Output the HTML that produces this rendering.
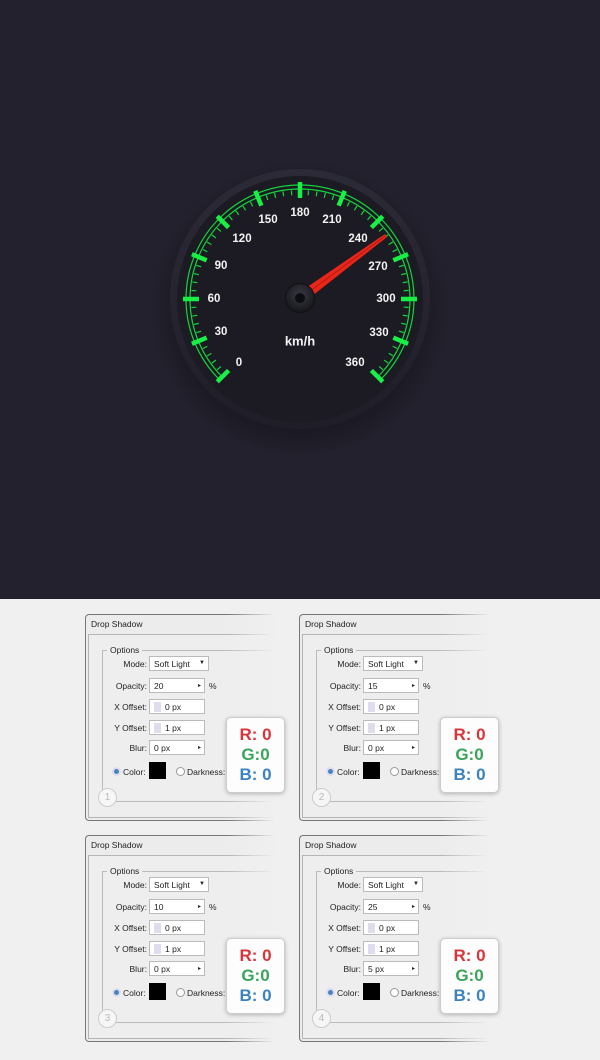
<!DOCTYPE html>
<html><head><meta charset="utf-8"><style>
*{margin:0;padding:0;box-sizing:border-box}
body{width:600px;height:1060px;background:#f0f0f0;position:relative;overflow:hidden;font-family:"Liberation Sans",sans-serif}
#top{position:absolute;left:0;top:0;width:600px;height:599px;background:#23212d}
.p{position:absolute;width:190px;height:207px;font-size:8.5px;color:#222;-webkit-mask-image:linear-gradient(90deg,#000 75%,rgba(0,0,0,0) 100%);mask-image:linear-gradient(90deg,#000 75%,rgba(0,0,0,0) 100%)}
.frame{position:absolute;left:0;top:0;width:190px;height:207px;border:1px solid #777;border-right:none;border-radius:4px 0 0 4px;background:#ececec}
.inner{position:absolute;left:3px;top:20px;width:187px;height:184px;border:1px solid #b5b5b5;border-right:none;background:#eeeeee}
.title{position:absolute;left:6px;top:5px;font-size:8.5px}
.grp{position:absolute;left:17px;top:36px;width:170px;height:152px;border:1px solid #bbb;border-right:none}
.gl{position:absolute;left:22px;top:31px;background:#eee;padding:0 3px;font-size:8.5px}
.lb{position:absolute;width:60px;text-align:right;font-size:8.5px}
.bx{position:absolute;height:15px;background:#fff;border:1px solid #bbb;font-size:8.5px;padding:2px 0 0 4px}
.ar{position:absolute;right:3px;top:3px;font-size:6px}
.sp{display:inline-block;width:7px;height:10px;background:#dde;margin-right:4px;vertical-align:-2px}
.rad{position:absolute;width:9px;height:9px;border-radius:50%;border:1px solid #999;background:#fff}
.rgb{position:absolute;width:59px;height:76px;background:#fdfdfd;border:1px solid #ccc;border-radius:5px;box-shadow:0 1px 4px rgba(0,0,0,.25);font-weight:bold;font-size:17px;line-height:20px;text-align:center;padding-top:7px}
.num{position:absolute;width:19px;height:19px;border-radius:50%;border:1px solid #ccc;background:#f6f6f6;color:#bbb;font-size:10px;text-align:center;line-height:17px}
</style></head><body>
<div id="top">
<svg width="600" height="599" viewBox="0 0 600 599">
<defs>
<radialGradient id="sh" cx="50%" cy="52%" r="50%"><stop offset="70%" stop-color="#000" stop-opacity=".35"/><stop offset="100%" stop-color="#000" stop-opacity="0"/></radialGradient>
<linearGradient id="bz" x1="0" y1="0" x2="0" y2="1"><stop offset="0" stop-color="#2b2a36"/><stop offset="1" stop-color="#1f1e28"/></linearGradient>
<radialGradient id="hub" cx="50%" cy="40%" r="60%"><stop offset="0" stop-color="#3a3a44"/><stop offset="1" stop-color="#15151b"/></radialGradient>
</defs>
<circle cx="300" cy="304" r="150" fill="url(#sh)"/>
<circle cx="300" cy="299" r="130" fill="url(#bz)"/>
<circle cx="300" cy="299" r="123" fill="#1c1b23"/>
<g stroke="#12d63c" fill="none">
<path d="M222.2 376.8 A110 110 0 1 1 377.8 376.8" stroke-width="1.2"/>
<path d="M219.4 379.6 A114 114 0 1 1 380.6 379.6" stroke-width="1.2"/>
<path d="M224.7 374.3 A106.5 106.5 0 1 1 375.3 374.3" stroke-width="5" stroke-dasharray="1.2 7.16" stroke-dashoffset="0.6"/>
</g>
<g stroke="#18f046" stroke-width="4.5">
<line x1="300" y1="182" x2="300" y2="198" transform="rotate(-135 300 299)"/>
<line x1="300" y1="182" x2="300" y2="198" transform="rotate(-112.5 300 299)"/>
<line x1="300" y1="182" x2="300" y2="198" transform="rotate(-90 300 299)"/>
<line x1="300" y1="182" x2="300" y2="198" transform="rotate(-67.5 300 299)"/>
<line x1="300" y1="182" x2="300" y2="198" transform="rotate(-45 300 299)"/>
<line x1="300" y1="182" x2="300" y2="198" transform="rotate(-22.5 300 299)"/>
<line x1="300" y1="182" x2="300" y2="198"/>
<line x1="300" y1="182" x2="300" y2="198" transform="rotate(22.5 300 299)"/>
<line x1="300" y1="182" x2="300" y2="198" transform="rotate(45 300 299)"/>
<line x1="300" y1="182" x2="300" y2="198" transform="rotate(67.5 300 299)"/>
<line x1="300" y1="182" x2="300" y2="198" transform="rotate(90 300 299)"/>
<line x1="300" y1="182" x2="300" y2="198" transform="rotate(112.5 300 299)"/>
<line x1="300" y1="182" x2="300" y2="198" transform="rotate(135 300 299)"/>
</g>
<g fill="#f2f2f2" font-family="Liberation Sans,sans-serif" font-weight="bold" font-size="11.5" text-anchor="middle" dominant-baseline="central">
<text x="239" y="363">0</text><text x="221" y="332">30</text><text x="214" y="299">60</text><text x="221" y="266">90</text><text x="242" y="239">120</text><text x="268" y="220">150</text><text x="300" y="213">180</text><text x="332" y="220">210</text><text x="358" y="239">240</text><text x="378" y="267">270</text><text x="386" y="299">300</text><text x="379" y="333">330</text><text x="355" y="363">360</text>
<text x="300" y="341" font-size="13">km/h</text>
</g>
<polygon points="297,294 385,234 387,237 303,303" fill="#e8261a"/>
<line x1="302" y1="297" x2="385" y2="236" stroke="#b81810" stroke-width="1"/>
<circle cx="300" cy="298" r="14.5" fill="url(#hub)" stroke="#111" stroke-width="1"/>
<circle cx="300" cy="298" r="5" fill="#0d0d11"/>
</svg>
</div>

<div class="p" style="left:85px;top:614px">
<div class="frame"></div><div class="title">Drop Shadow</div><div class="inner"></div><div class="grp"></div><div class="gl">Options</div>
<div class="lb" style="left:2px;top:45px">Mode:</div><div class="bx" style="left:64px;top:42px;width:60px">Soft Light<span class="ar">▼</span></div>
<div class="lb" style="left:2px;top:67px">Opacity:</div><div class="bx" style="left:64px;top:64px;width:56px">20<span class="ar">▸</span></div><div style="position:absolute;left:124px;top:67px">%</div>
<div class="lb" style="left:2px;top:88px">X Offset:</div><div class="bx" style="left:64px;top:85px;width:56px"><span class="sp"></span>0 px</div>
<div class="lb" style="left:2px;top:109px">Y Offset:</div><div class="bx" style="left:64px;top:106px;width:56px"><span class="sp"></span>1 px</div>
<div class="lb" style="left:2px;top:129px">Blur:</div><div class="bx" style="left:64px;top:126px;width:56px">0 px<span class="ar">▸</span></div>
<div class="rad" style="left:27px;top:153px;background:#4a84c0;border:2px solid #dde"></div><div style="position:absolute;left:38px;top:153px">Color:</div>
<div style="position:absolute;left:64px;top:148px;width:17px;height:17px;background:#000"></div>
<div class="rad" style="left:91px;top:153px"></div><div style="position:absolute;left:102px;top:153px">Darkness:</div>
<div class="num" style="left:13px;top:174px">1</div>
</div>
<div class="rgb" style="left:226px;top:717px"><span style="color:#d9343a">R: 0</span><br><span style="color:#3aa55a">G:0</span><br><span style="color:#3b82c0">B: 0</span></div>

<div class="p" style="left:299px;top:614px">
<div class="frame"></div><div class="title">Drop Shadow</div><div class="inner"></div><div class="grp"></div><div class="gl">Options</div>
<div class="lb" style="left:2px;top:45px">Mode:</div><div class="bx" style="left:64px;top:42px;width:60px">Soft Light<span class="ar">▼</span></div>
<div class="lb" style="left:2px;top:67px">Opacity:</div><div class="bx" style="left:64px;top:64px;width:56px">15<span class="ar">▸</span></div><div style="position:absolute;left:124px;top:67px">%</div>
<div class="lb" style="left:2px;top:88px">X Offset:</div><div class="bx" style="left:64px;top:85px;width:56px"><span class="sp"></span>0 px</div>
<div class="lb" style="left:2px;top:109px">Y Offset:</div><div class="bx" style="left:64px;top:106px;width:56px"><span class="sp"></span>1 px</div>
<div class="lb" style="left:2px;top:129px">Blur:</div><div class="bx" style="left:64px;top:126px;width:56px">0 px<span class="ar">▸</span></div>
<div class="rad" style="left:27px;top:153px;background:#4a84c0;border:2px solid #dde"></div><div style="position:absolute;left:38px;top:153px">Color:</div>
<div style="position:absolute;left:64px;top:148px;width:17px;height:17px;background:#000"></div>
<div class="rad" style="left:91px;top:153px"></div><div style="position:absolute;left:102px;top:153px">Darkness:</div>
<div class="num" style="left:13px;top:174px">2</div>
</div>
<div class="rgb" style="left:440px;top:717px"><span style="color:#d9343a">R: 0</span><br><span style="color:#3aa55a">G:0</span><br><span style="color:#3b82c0">B: 0</span></div>

<div class="p" style="left:85px;top:835px">
<div class="frame"></div><div class="title">Drop Shadow</div><div class="inner"></div><div class="grp"></div><div class="gl">Options</div>
<div class="lb" style="left:2px;top:45px">Mode:</div><div class="bx" style="left:64px;top:42px;width:60px">Soft Light<span class="ar">▼</span></div>
<div class="lb" style="left:2px;top:67px">Opacity:</div><div class="bx" style="left:64px;top:64px;width:56px">10<span class="ar">▸</span></div><div style="position:absolute;left:124px;top:67px">%</div>
<div class="lb" style="left:2px;top:88px">X Offset:</div><div class="bx" style="left:64px;top:85px;width:56px"><span class="sp"></span>0 px</div>
<div class="lb" style="left:2px;top:109px">Y Offset:</div><div class="bx" style="left:64px;top:106px;width:56px"><span class="sp"></span>1 px</div>
<div class="lb" style="left:2px;top:129px">Blur:</div><div class="bx" style="left:64px;top:126px;width:56px">0 px<span class="ar">▸</span></div>
<div class="rad" style="left:27px;top:153px;background:#4a84c0;border:2px solid #dde"></div><div style="position:absolute;left:38px;top:153px">Color:</div>
<div style="position:absolute;left:64px;top:148px;width:17px;height:17px;background:#000"></div>
<div class="rad" style="left:91px;top:153px"></div><div style="position:absolute;left:102px;top:153px">Darkness:</div>
<div class="num" style="left:13px;top:174px">3</div>
</div>
<div class="rgb" style="left:226px;top:938px"><span style="color:#d9343a">R: 0</span><br><span style="color:#3aa55a">G:0</span><br><span style="color:#3b82c0">B: 0</span></div>

<div class="p" style="left:299px;top:835px">
<div class="frame"></div><div class="title">Drop Shadow</div><div class="inner"></div><div class="grp"></div><div class="gl">Options</div>
<div class="lb" style="left:2px;top:45px">Mode:</div><div class="bx" style="left:64px;top:42px;width:60px">Soft Light<span class="ar">▼</span></div>
<div class="lb" style="left:2px;top:67px">Opacity:</div><div class="bx" style="left:64px;top:64px;width:56px">25<span class="ar">▸</span></div><div style="position:absolute;left:124px;top:67px">%</div>
<div class="lb" style="left:2px;top:88px">X Offset:</div><div class="bx" style="left:64px;top:85px;width:56px"><span class="sp"></span>0 px</div>
<div class="lb" style="left:2px;top:109px">Y Offset:</div><div class="bx" style="left:64px;top:106px;width:56px"><span class="sp"></span>1 px</div>
<div class="lb" style="left:2px;top:129px">Blur:</div><div class="bx" style="left:64px;top:126px;width:56px">5 px<span class="ar">▸</span></div>
<div class="rad" style="left:27px;top:153px;background:#4a84c0;border:2px solid #dde"></div><div style="position:absolute;left:38px;top:153px">Color:</div>
<div style="position:absolute;left:64px;top:148px;width:17px;height:17px;background:#000"></div>
<div class="rad" style="left:91px;top:153px"></div><div style="position:absolute;left:102px;top:153px">Darkness:</div>
<div class="num" style="left:13px;top:174px">4</div>
</div>
<div class="rgb" style="left:440px;top:938px"><span style="color:#d9343a">R: 0</span><br><span style="color:#3aa55a">G:0</span><br><span style="color:#3b82c0">B: 0</span></div>
</body></html>
